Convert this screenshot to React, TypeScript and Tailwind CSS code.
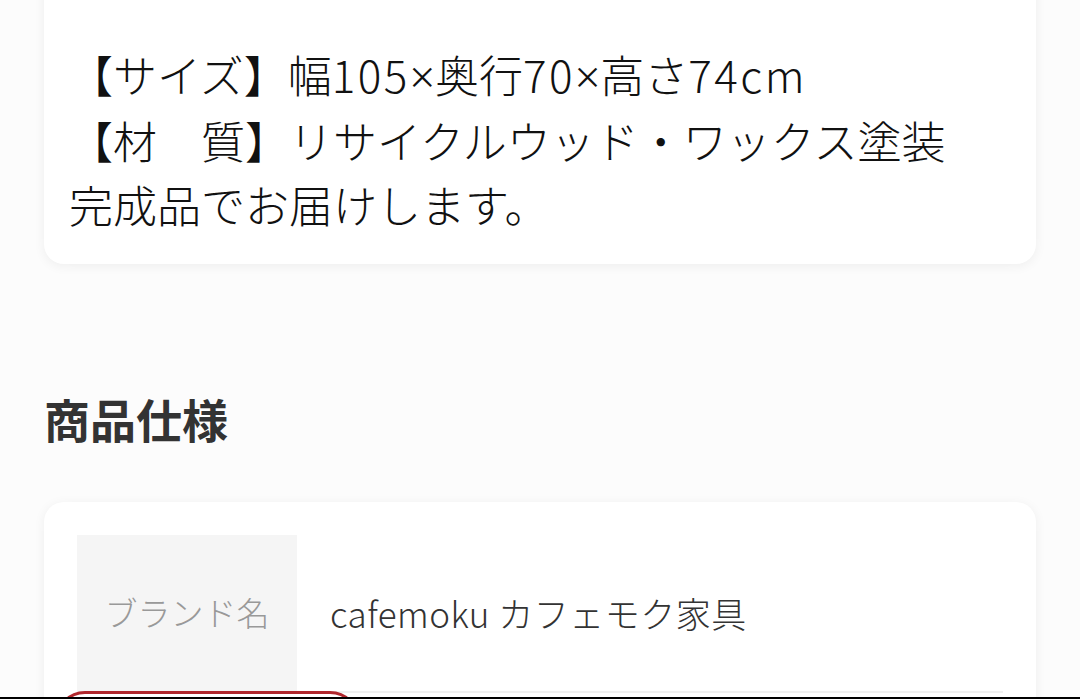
const jp = "font-['Noto_Sans_CJK_JP','Noto_Sans',sans-serif]";

const specs = [
  { label: "ブランド名", value: "cafemoku カフェモク家具" },
  { label: "カラー", value: "ナチュラル" },
];

// narrow latin multiplication sign, as in the screenshot
const X = () => <span className="font-['Noto_Sans',sans-serif]">×</span>;
const N = ({ children }: { children: string }) => <span className="tracking-[2.5px]">{children}</span>;

export default function App() {
  return (
    <div className={`min-h-screen overflow-hidden bg-[#fcfcfc] px-[44px] pb-40 ${jp}`}>
      {/* description card, top edge scrolled out of view */}
      <div className="-mt-[30px] rounded-[20px] bg-white px-[25px] pb-[28px] pt-[72px] shadow-[0_2px_12px_rgba(0,0,0,0.06)]">
        <p className="text-[44px] font-light leading-[64px] text-[#111]">
          【サイズ】幅<N>105</N>
          <X />
          奥行<N>70</N>
          <X />
          高さ<N>74cm</N>
          <br />
          【材　質】リサイクルウッド・ワックス塗装
          <br />
          完成品でお届けします。
        </p>
      </div>

      <h2 className="mt-[122px] text-[46px] font-bold leading-[64px] text-[#333]">商品仕様</h2>

      <div className="mt-[52px] rounded-[20px] bg-white p-[33px] shadow-[0_2px_12px_rgba(0,0,0,0.06)]">
        {specs.map((row) => (
          <div key={row.label} className="flex border-b-2 border-[#f0f0f0]">
            <div className="flex h-[156px] w-[220px] shrink-0 items-center justify-center bg-[#f5f5f5] text-[33px] font-light text-[#999]">
              {row.label}
            </div>
            <div className="flex items-center pl-[33px] text-[35px] font-light tracking-[0.5px] text-[#333]">
              {row.value}
            </div>
          </div>
        ))}
      </div>

      {/* floating button peeking from bottom */}
      <div className="fixed left-[55px] top-[691px] h-[60px] w-[305px] rounded-full border-[3px] border-[#b0272d] bg-white" />
      <div className="fixed bottom-0 left-0 h-[2px] w-full bg-black" />
    </div>
  );
}
